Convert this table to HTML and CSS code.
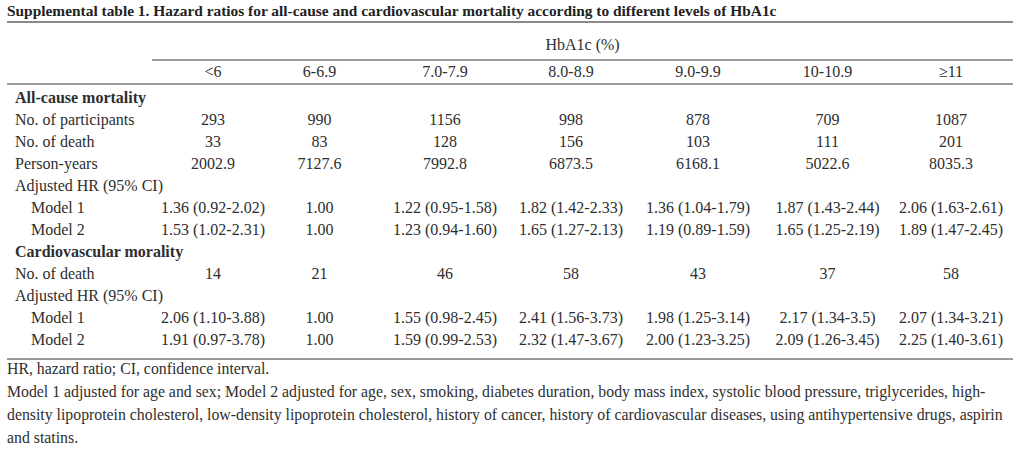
FILE: index.html
```html
<!DOCTYPE html>
<html>
<head>
<meta charset="utf-8">
<link rel="stylesheet" href="styles.css">
</head>
<body>
<div class="page">
  <div class="title">Supplemental table 1. Hazard ratios for all-cause and cardiovascular mortality according to different levels of HbA1c</div>
  <table class="tbl">
    <colgroup>
      <col class="c-label">
      <col class="c1"><col class="c2"><col class="c3"><col class="c4"><col class="c5"><col class="c6"><col class="c7">
    </colgroup>
    <thead>
      <tr class="super"><th></th><th colspan="7" class="span">HbA1c (%)</th></tr>
      <tr class="levels"><th></th><th>&lt;6</th><th>6-6.9</th><th>7.0-7.9</th><th>8.0-8.9</th><th>9.0-9.9</th><th>10-10.9</th><th>≥11</th></tr>
    </thead>
    <tbody>
      <tr class="first"><td class="sec" colspan="8">All-cause mortality</td></tr>
      <tr><td class="lab">No. of participants</td><td>293</td><td>990</td><td>1156</td><td>998</td><td>878</td><td>709</td><td>1087</td></tr>
      <tr><td class="lab">No. of death</td><td>33</td><td>83</td><td>128</td><td>156</td><td>103</td><td>111</td><td>201</td></tr>
      <tr><td class="lab">Person-years</td><td>2002.9</td><td>7127.6</td><td>7992.8</td><td>6873.5</td><td>6168.1</td><td>5022.6</td><td>8035.3</td></tr>
      <tr><td class="lab" colspan="8">Adjusted HR (95% CI)</td></tr>
      <tr><td class="lab ind">Model 1</td><td>1.36 (0.92-2.02)</td><td>1.00</td><td>1.22 (0.95-1.58)</td><td>1.82 (1.42-2.33)</td><td>1.36 (1.04-1.79)</td><td>1.87 (1.43-2.44)</td><td>2.06 (1.63-2.61)</td></tr>
      <tr><td class="lab ind">Model 2</td><td>1.53 (1.02-2.31)</td><td>1.00</td><td>1.23 (0.94-1.60)</td><td>1.65 (1.27-2.13)</td><td>1.19 (0.89-1.59)</td><td>1.65 (1.25-2.19)</td><td>1.89 (1.47-2.45)</td></tr>
      <tr><td class="sec" colspan="8">Cardiovascular morality</td></tr>
      <tr><td class="lab">No. of death</td><td>14</td><td>21</td><td>46</td><td>58</td><td>43</td><td>37</td><td>58</td></tr>
      <tr><td class="lab" colspan="8">Adjusted HR (95% CI)</td></tr>
      <tr><td class="lab ind">Model 1</td><td>2.06 (1.10-3.88)</td><td>1.00</td><td>1.55 (0.98-2.45)</td><td>2.41 (1.56-3.73)</td><td>1.98 (1.25-3.14)</td><td>2.17 (1.34-3.5)</td><td>2.07 (1.34-3.21)</td></tr>
      <tr class="last"><td class="lab ind">Model 2</td><td>1.91 (0.97-3.78)</td><td>1.00</td><td>1.59 (0.99-2.53)</td><td>2.32 (1.47-3.67)</td><td>2.00 (1.23-3.25)</td><td>2.09 (1.26-3.45)</td><td>2.25 (1.40-3.61)</td></tr>
    </tbody>
  </table>
  <div class="notes">
    <p>HR, hazard ratio; CI, confidence interval.</p>
    <p>Model 1 adjusted for age and sex; Model 2 adjusted for age, sex, smoking, diabetes duration, body mass index, systolic blood pressure, triglycerides, high-density lipoprotein cholesterol, low-density lipoprotein cholesterol, history of cancer, history of cardiovascular diseases, using antihypertensive drugs, aspirin and statins.</p>
  </div>
</div>
</body>
</html>
```
FILE: styles.css
```css
html, body {
  margin: 0;
  padding: 0;
  background: #ffffff;
}
body {
  font-family: "Liberation Serif", "Times New Roman", serif;
  color: #2e2e2e;
  font-size: 16px;
}
.page {
  width: 1006px;
  padding: 2px 0 0 7px;
}
.title {
  font-weight: bold;
  font-size: 15.4px;
  line-height: 18px;
  color: #222;
  border-bottom: 2px solid #8a8a8a;
  padding-bottom: 1px;
  white-space: nowrap;
}
.tbl {
  width: 1006px;
  border-collapse: collapse;
  table-layout: fixed;
}
.c-label { width: 145px; }
.c1 { width: 114px; }
.c2 { width: 116px; }
.c3 { width: 126px; }
.c4 { width: 126px; }
.c5 { width: 128px; }
.c6 { width: 127px; }
.c7 { width: 124px; }
.tbl th, .tbl td {
  padding: 0;
  font-weight: normal;
  text-align: center;
  white-space: nowrap;
  line-height: 22px;
}
.tbl tr > :nth-child(2) { padding-left: 8px; }
.tbl tr > :nth-child(3) { padding-right: 9px; }
.tbl tr > :nth-child(7) { padding-left: 4px; }
.tbl .super th {
  height: 36px;
  line-height: 28px;
  vertical-align: bottom;
  padding: 0;
}
.super .span {
  border-bottom: 2px solid #9a9a9a;
}
.levels th {
  border-bottom: 2px solid #9a9a9a;
  line-height: 22px;
}
.tbl td.lab, .tbl td.sec {
  text-align: left;
  padding-left: 8px;
  padding-right: 0;
}
.tbl td.sec {
  font-weight: bold;
}
.tbl td.ind {
  padding-left: 24px;
}
.first td {
  padding-top: 2px;
}
.last td {
  border-bottom: 2px solid #9a9a9a;
  padding-bottom: 7px;
}
.notes {
  width: 1010px;
  margin-top: -3px;
  font-size: 15.8px;
}
.notes p {
  margin: 0;
  line-height: 23px;
}
```
